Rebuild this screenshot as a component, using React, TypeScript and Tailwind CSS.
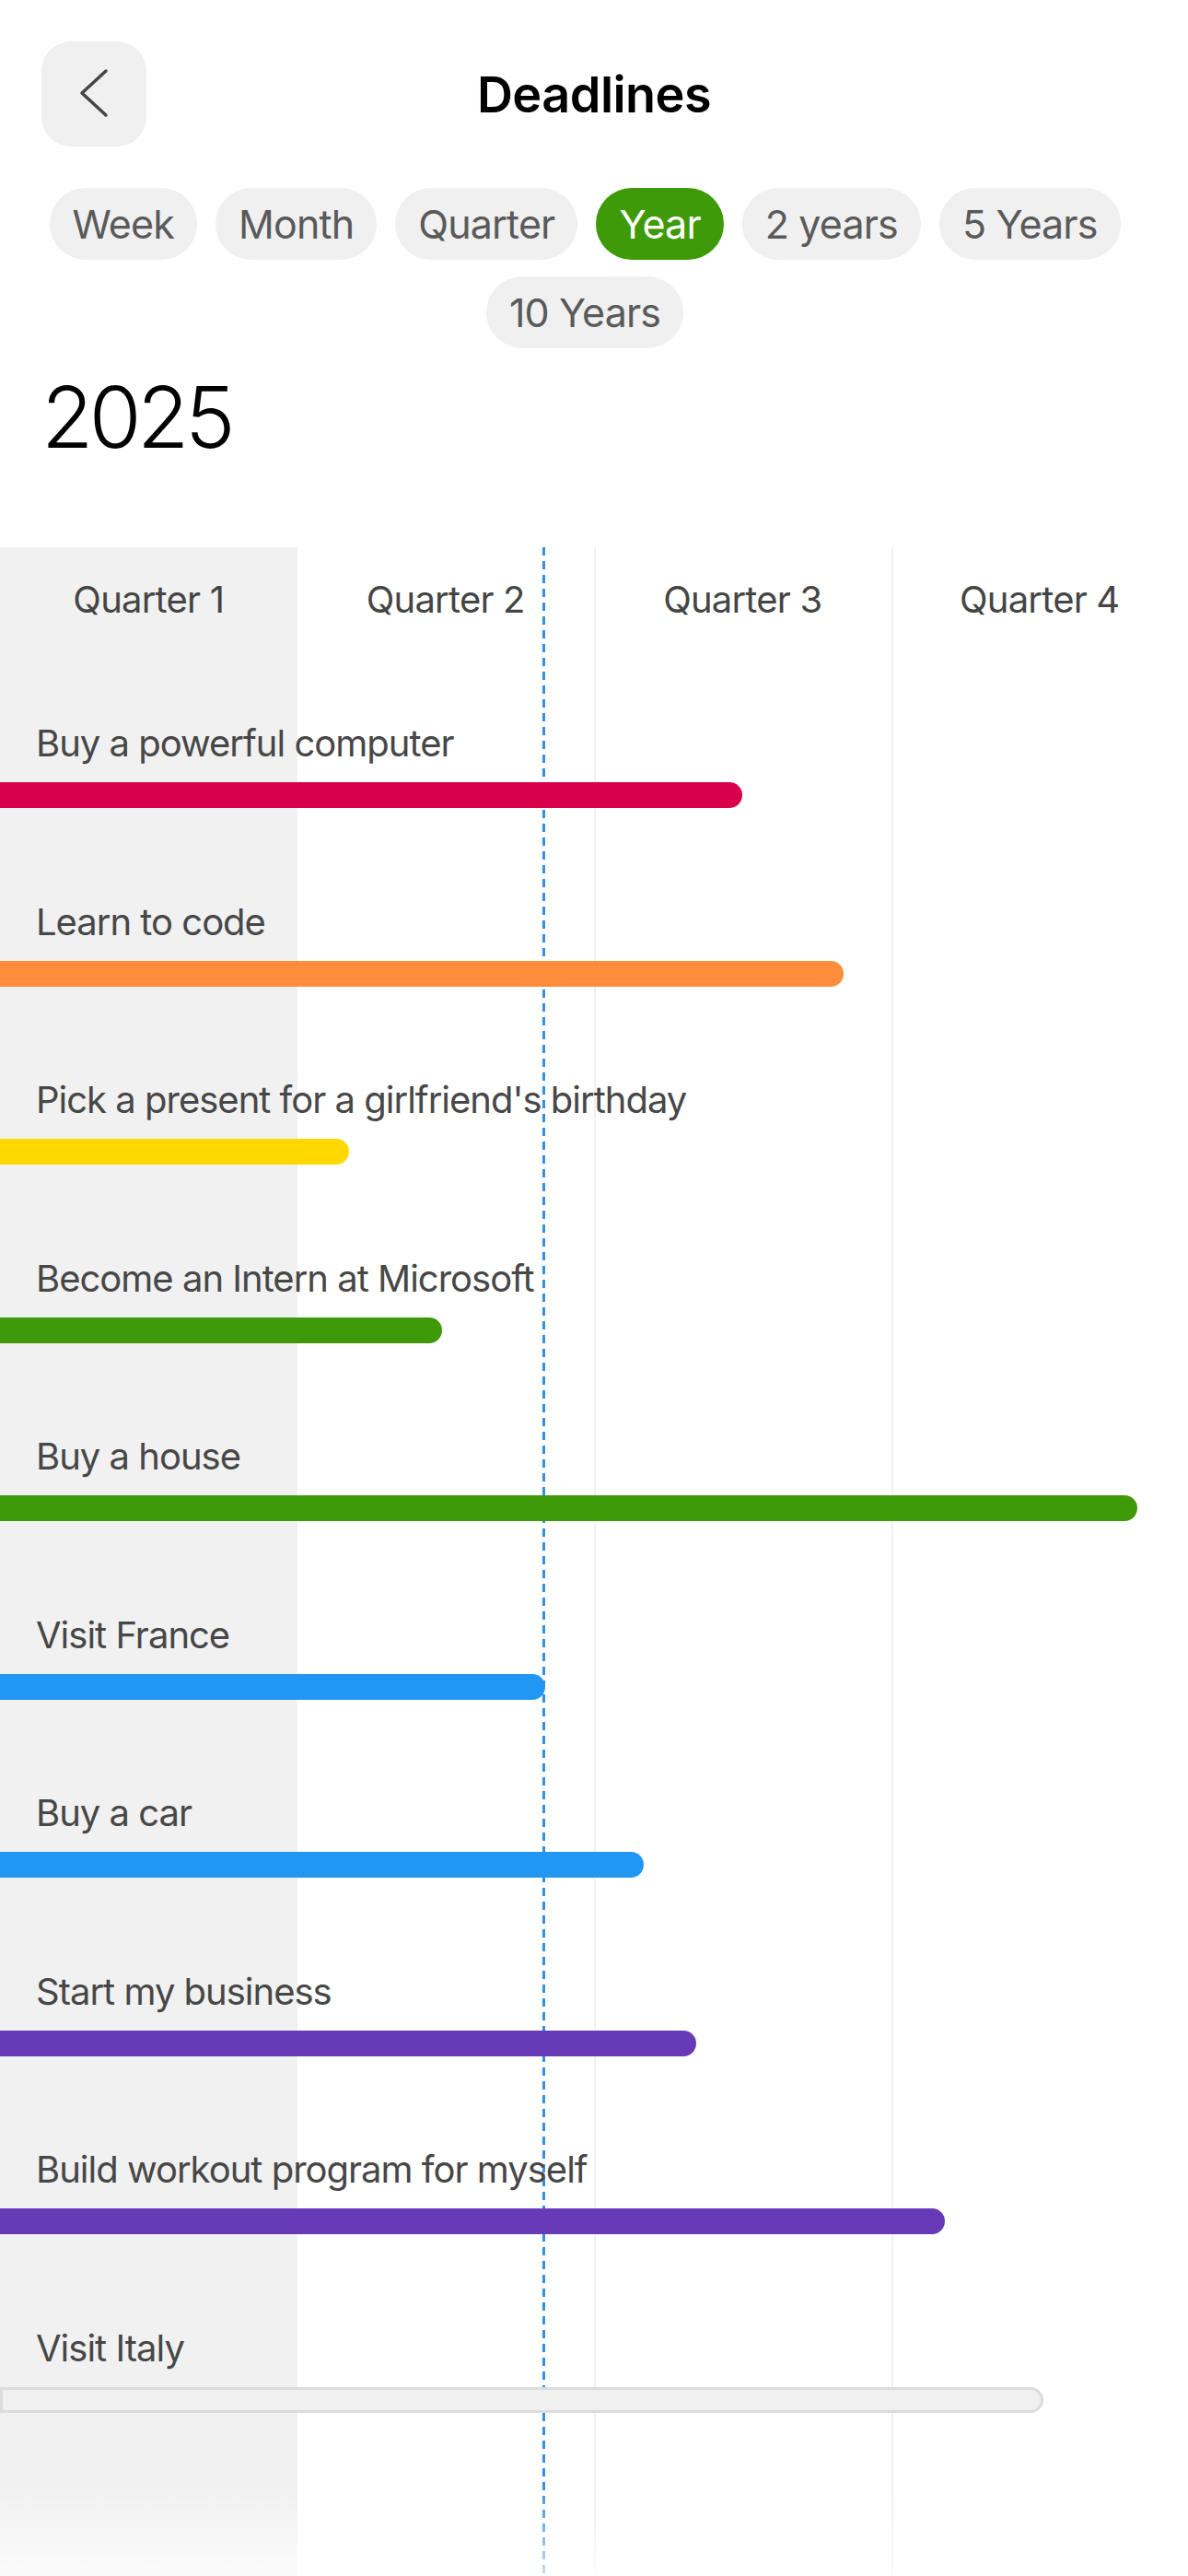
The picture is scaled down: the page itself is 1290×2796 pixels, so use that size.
const ranges = ["Week", "Month", "Quarter", "Year", "2 years", "5 Years", "10 Years"]

const goals = [
  { title: "Buy a powerful computer", end: 806, color: "bg-[#d9004b]" },
  { title: "Learn to code", end: 916, color: "bg-[#ff8d3b]" },
  { title: "Pick a present for a girlfriend's birthday", end: 379, color: "bg-[#ffd800]" },
  { title: "Become an Intern at Microsoft", end: 480, color: "bg-[#3e9a08]" },
  { title: "Buy a house", end: 1235, color: "bg-[#3e9a08]" },
  { title: "Visit France", end: 592, color: "bg-[#2196f3]" },
  { title: "Buy a car", end: 699, color: "bg-[#2196f3]" },
  { title: "Start my business", end: 756, color: "bg-[#673ab7]" },
  { title: "Build workout program for myself", end: 1026, color: "bg-[#673ab7]" },
  { title: "Visit Italy", end: 1133, color: "", empty: true },
]

const App = () => {
  return (
    <div className="h-[2796px] w-[1290px] overflow-hidden bg-white flex flex-col font-['Inter','Noto_Sans',sans-serif]">
      {/* header */}
      <header className="grid grid-cols-[114px_1fr_114px] items-center px-[45px] pt-[45px]">
        <button className="w-[114px] h-[114px] rounded-[32px] bg-[#f0f0f0]">
          <svg width="114" height="114" viewBox="0 0 114 114" fill="none">
            <path d="M70 32 L44 56 L70 80" stroke="#454545" strokeWidth="3.5" strokeLinecap="round" strokeLinejoin="round" />
          </svg>
        </button>
        <h1 className="text-center text-[54px] font-semibold text-black tracking-[-0.01em]">Deadlines</h1>
        <div />
      </header>

      <div className="mt-[45px] flex flex-wrap justify-center gap-y-[18px] px-[45px]">
        {ranges.map((r) => (
          <span
            key={r}
            className={
              r === "Year"
                ? "mr-[20px] h-[78px] px-[25px] rounded-full flex items-center text-[43px] tracking-[-0.02em] bg-[#3e9a08] text-white"
                : "mr-[20px] h-[78px] px-[25px] rounded-full flex items-center text-[43px] tracking-[-0.02em] bg-[#f0f0f0] text-[#5a5a5a]"
            }
          >
            {r}
          </span>
        ))}
      </div>

      <div className="mt-[29px] px-[45px] text-[92px] leading-none font-light text-black tracking-[-0.05em]">2025</div>

      {/* chart */}
      <div className="relative mt-[95px] flex-1">
        <div className="absolute inset-0 grid grid-cols-4">
          <div className="bg-[#f1f1f1]" />
          <div />
          <div className="border-l-2 border-[#f0f0f0]" />
          <div className="border-l-2 border-[#f0f0f0]" />
        </div>
        <div className="absolute top-0 bottom-0 left-[589px] w-[3px] bg-[repeating-linear-gradient(to_bottom,#3390df_0px,#3390df_9px,transparent_9px,transparent_15px)]" />

        <div className="relative">
          <div className="grid grid-cols-4 h-[114px] items-center text-[40px] leading-[48px] text-[#454545] tracking-[-0.02em]">
            <span className="text-center">Quarter 1</span>
            <span className="text-center">Quarter 2</span>
            <span className="text-center">Quarter 3</span>
            <span className="text-center">Quarter 4</span>
          </div>

          {goals.map((g) => (
            <div key={g.title} className="h-[193.5px] pt-[75px]">
              <div className="px-[39px] text-[40px] leading-[48px] text-[#474747] tracking-[-0.025em] whitespace-nowrap">
                {g.title}
              </div>
              <div
                className={
                  g.empty
                    ? "mt-[18px] h-[28px] rounded-r-full rounded-l-[4px] border-[3px] border-[#dcdcdc] bg-[#f0f0f0]"
                    : `mt-[18px] h-[28px] rounded-r-full ${g.color}`
                }
                style={{ width: g.end }}
              />
            </div>
          ))}
        </div>

        <div className="absolute left-0 right-0 bottom-0 h-[100px] bg-gradient-to-b from-transparent to-white/70" />
      </div>
    </div>
  )
}

export default App
